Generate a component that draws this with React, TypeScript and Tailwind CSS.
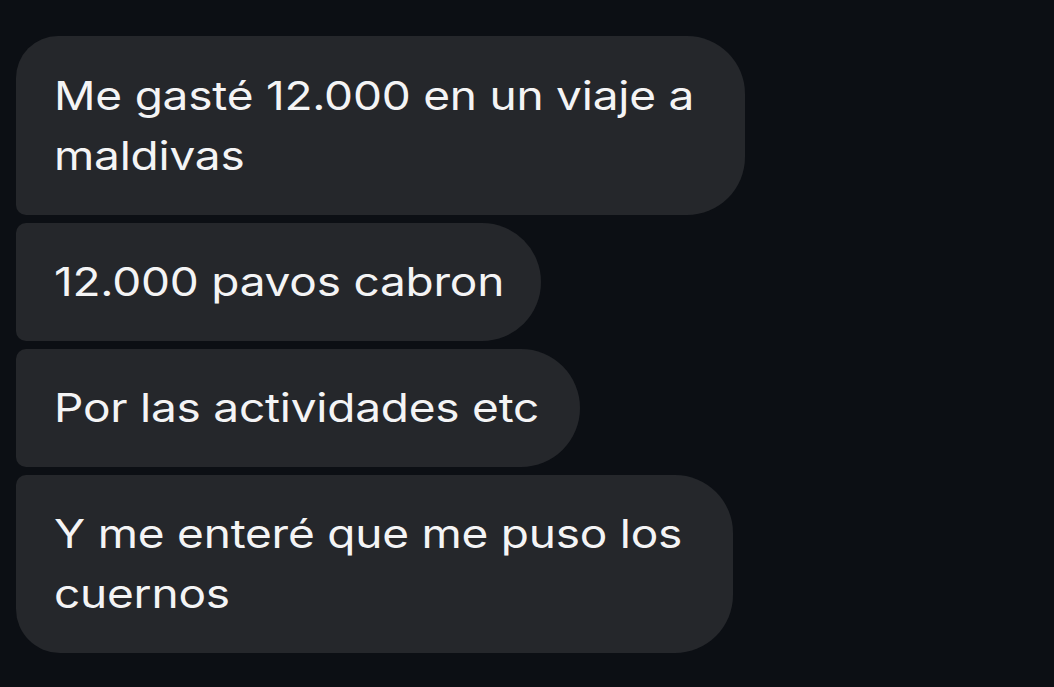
import React from "react";

const font = { fontFamily: "Inter, 'Noto Sans', sans-serif" };

function T({ children }: { children: React.ReactNode }) {
  return <span className="inline-block origin-left scale-x-[1.18]">{children}</span>;
}

export default function App() {
  return (
    <div
      className="w-[1054px] h-[687px] bg-[#0c0f14] overflow-hidden pl-[16px] pt-[36px] flex flex-col gap-[8px] text-[#f4f4f5] text-[39px] leading-[60px] tracking-[-0.2px]"
      style={font}
    >
      <div className="w-[729px] h-[179px] bg-[#25272b] rounded-tl-[42px] rounded-bl-[10px] rounded-tr-[58px] rounded-br-[58px] pl-[38px] py-[29.5px] whitespace-nowrap flex flex-col">
        <T>Me gasté 12.000 en un viaje a</T>
        <T>maldivas</T>
      </div>
      <div className="w-[525px] h-[118px] bg-[#25272b] rounded-tl-[10px] rounded-bl-[10px] rounded-tr-[59px] rounded-br-[59px] pl-[38px] py-[29px] whitespace-nowrap flex flex-col">
        <T>12.000 pavos cabron</T>
      </div>
      <div className="w-[564px] h-[118px] bg-[#25272b] rounded-tl-[10px] rounded-bl-[10px] rounded-tr-[59px] rounded-br-[59px] pl-[38px] py-[29px] whitespace-nowrap flex flex-col">
        <T>Por las actividades etc</T>
      </div>
      <div className="w-[717px] h-[178px] bg-[#25272b] rounded-tl-[10px] rounded-bl-[44px] rounded-tr-[58px] rounded-br-[58px] pl-[38px] py-[29px] whitespace-nowrap flex flex-col">
        <T>Y me enteré que me puso los</T>
        <T>cuernos</T>
      </div>
    </div>
  );
}
